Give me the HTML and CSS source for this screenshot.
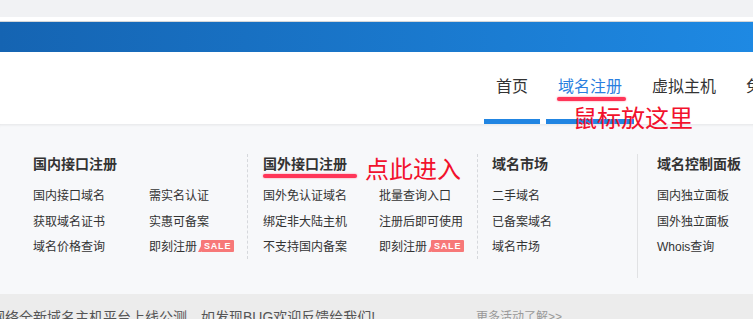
FILE: index.html
```html
<!DOCTYPE html>
<html lang="zh-CN">
<head>
    <meta charset="UTF-8">
    <meta name="viewport" content="width=device-width, initial-scale=1.0">
    <title>域名注册</title>
    <link rel="stylesheet" href="styles.css">
</head>
<body>

    <!-- Top strip + banner -->
    <div class="topbar"></div>
    <div class="banner"></div>

    <!-- Header nav -->
    <header class="header">
        <nav class="nav">
            <a class="nav-item active" href="#">首页</a>
            <a class="nav-item hover" href="#">域名注册
                <span class="mark-line"></span>
                <span class="mark-text">鼠标放这里</span>
            </a>
            <a class="nav-item" href="#">虚拟主机</a>
            <a class="nav-item" href="#">免费主机</a>
        </nav>
    </header>

    <!-- Dropdown panel -->
    <div class="dropdown">
        <div class="col col-dashed">
            <h4 class="col-title">国内接口注册</h4>
            <ul class="links links-two">
                <li><a href="#">国内接口域名</a></li>
                <li><a href="#">需实名认证</a></li>
                <li><a href="#">获取域名证书</a></li>
                <li><a href="#">实惠可备案</a></li>
                <li><a href="#">域名价格查询</a></li>
                <li><a href="#">即刻注册</a><span class="sale">SALE</span></li>
            </ul>
        </div>
        <div class="col col-dashed col-wide">
            <h4 class="col-title">国外接口注册
                <span class="mark-line"></span>
                <span class="mark-text">点此进入</span>
            </h4>
            <ul class="links links-two">
                <li><a href="#">国外免认证域名</a></li>
                <li><a href="#">批量查询入口</a></li>
                <li><a href="#">绑定非大陆主机</a></li>
                <li><a href="#">注册后即可使用</a></li>
                <li><a href="#">不支持国内备案</a></li>
                <li><a href="#">即刻注册</a><span class="sale">SALE</span></li>
            </ul>
        </div>
        <div class="col col-market">
            <h4 class="col-title">域名市场</h4>
            <ul class="links">
                <li><a href="#">二手域名</a></li>
                <li><a href="#">已备案域名</a></li>
                <li><a href="#">域名市场</a></li>
            </ul>
        </div>
        <div class="col col-panel">
            <h4 class="col-title">域名控制面板</h4>
            <ul class="links">
                <li><a href="#">国内独立面板</a></li>
                <li><a href="#">国外独立面板</a></li>
                <li><a href="#">Whois查询</a></li>
            </ul>
        </div>
    </div>

    <!-- Notice bar -->
    <div class="notice">
        <span class="notice-text">网络全新域名主机平台上线公测，如发现BUG欢迎反馈给我们!</span>
        <a class="notice-more" href="#">更多活动了解&gt;&gt;</a>
    </div>

</body>
</html>
```

FILE: styles.css
```css
 * {
     box-sizing: border-box;
 }
 body {
     margin: 0;
     font-family: "Liberation Sans", "Noto Sans CJK SC", sans-serif;
     color: #333;
     background: #fff;
     overflow: hidden;
 }
 a {
     color: inherit;
     text-decoration: none;
 }
 ul {
     list-style: none;
     margin: 0;
     padding: 0;
 }

 /* top strip */
 .topbar {
     height: 21px;
     background: #f1f2f4;
     border-bottom: 4px solid #fff;
 }
 .banner {
     height: 31px;
     border-top: 1px solid #d4d6d8;
     background: linear-gradient(90deg, #1564b2, #1e89e3);
 }

 /* header nav */
 .header {
     height: 72px;
     background: #fff;
 }
 .nav {
     display: flex;
     padding-left: 484px;
     white-space: nowrap;
 }
 .nav-item {
     position: relative;
     display: block;
     height: 72px;
     padding: 26px 12px 0;
     margin-right: 6px;
     font-size: 16px;
     line-height: 18px;
     color: #333;
     border-bottom: 5px solid transparent;
 }
 .nav-item.active {
     border-bottom-color: #2185e2;
 }
 .nav-item.hover {
     color: #2b7fe0;
     border-bottom-color: #2185e2;
 }

 /* red annotations drawn over the page */
 .mark-line {
     position: absolute;
     height: 4px;
     border-radius: 2px;
     background: #ff3558;
     box-shadow: 0 0 2px #ff7d93;
 }
 .mark-text {
     position: absolute;
     font-size: 24px;
     line-height: 24px;
     font-weight: normal;
     color: #f2112c;
     white-space: nowrap;
     z-index: 2;
 }
 .nav-item .mark-line {
     left: 11px;
     top: 45px;
     width: 69px;
 }
 .nav-item .mark-text {
     left: 27px;
     top: 55px;
 }
 .col-title .mark-line {
     left: 0;
     top: 20px;
     width: 94px;
 }
 .col-title .mark-text {
     left: 102px;
     top: 4px;
 }

 /* dropdown */
 .dropdown {
     display: flex;
     align-items: flex-start;
     height: 170px;
     padding: 30px 0 0 33px;
     background: #f7f8fa;
     box-shadow: inset 0 3px 3px -2px rgba(0, 0, 0, 0.08);
 }
 .col {
     padding-left: 15px;
 }
 .col:first-child {
     width: 215px;
     padding-left: 0;
 }
 .col-dashed {
     border-right: 1px dashed #d6d8dc;
 }
 .col-wide {
     width: 230px;
 }
 .col-market {
     width: 159px;
     padding-left: 14px;
 }
 .col-panel {
     height: 124px;
     padding-left: 19px;
     border-left: 1px solid #e1e2e4;
 }
 .col-title {
     position: relative;
     margin: 0 0 8px;
     font-size: 14px;
     line-height: 20px;
     font-weight: bold;
     color: #333;
     white-space: nowrap;
 }
 .links li {
     display: flex;
     align-items: center;
     height: 25.5px;
     font-size: 12px;
     color: #333;
     white-space: nowrap;
 }
 .links-two {
     display: grid;
     grid-template-columns: 116px auto;
 }
 .sale {
     position: relative;
     margin-left: 4px;
     padding: 0 3px;
     height: 12px;
     line-height: 12px;
     font-size: 9px;
     font-weight: bold;
     letter-spacing: 0.8px;
     color: #fff;
     background: #f77878;
     border-radius: 1px;
 }
 .sale::before {
     content: "";
     position: absolute;
     left: -3px;
     bottom: 0;
     border-bottom: 6px solid #f77878;
     border-left: 3px solid transparent;
 }

 /* notice bar */
 .notice {
     display: flex;
     height: 30px;
     padding-top: 15px;
     background: #ececec;
     white-space: nowrap;
 }
 .notice-text {
     flex: 0 0 485px;
     margin-left: -9px;
     font-size: 14px;
     line-height: 16px;
     color: #555;
 }
 .notice-more {
     font-size: 12px;
     line-height: 16px;
     color: #999;
 }
```
